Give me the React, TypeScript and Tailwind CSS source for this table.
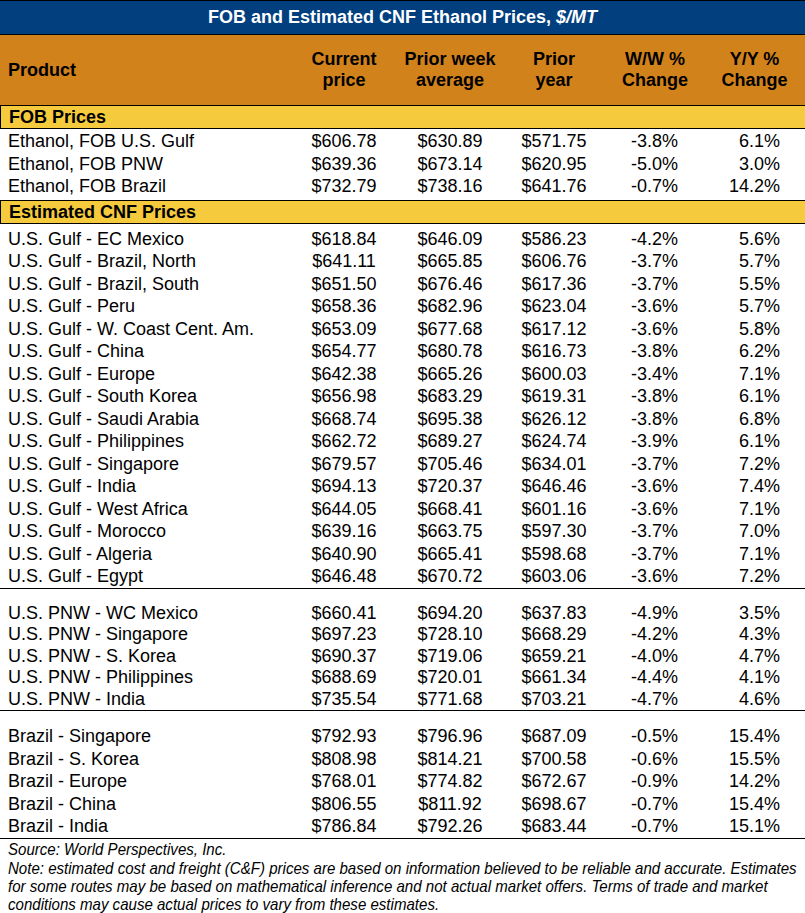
const fob = [
  ["Ethanol, FOB U.S. Gulf", "$606.78", "$630.89", "$571.75", "-3.8%", "6.1%"],
  ["Ethanol, FOB PNW", "$639.36", "$673.14", "$620.95", "-5.0%", "3.0%"],
  ["Ethanol, FOB Brazil", "$732.79", "$738.16", "$641.76", "-0.7%", "14.2%"],
];

const gulf = [
  ["U.S. Gulf - EC Mexico", "$618.84", "$646.09", "$586.23", "-4.2%", "5.6%"],
  ["U.S. Gulf - Brazil, North", "$641.11", "$665.85", "$606.76", "-3.7%", "5.7%"],
  ["U.S. Gulf - Brazil, South", "$651.50", "$676.46", "$617.36", "-3.7%", "5.5%"],
  ["U.S. Gulf - Peru", "$658.36", "$682.96", "$623.04", "-3.6%", "5.7%"],
  ["U.S. Gulf - W. Coast Cent. Am.", "$653.09", "$677.68", "$617.12", "-3.6%", "5.8%"],
  ["U.S. Gulf - China", "$654.77", "$680.78", "$616.73", "-3.8%", "6.2%"],
  ["U.S. Gulf - Europe", "$642.38", "$665.26", "$600.03", "-3.4%", "7.1%"],
  ["U.S. Gulf - South Korea", "$656.98", "$683.29", "$619.31", "-3.8%", "6.1%"],
  ["U.S. Gulf - Saudi Arabia", "$668.74", "$695.38", "$626.12", "-3.8%", "6.8%"],
  ["U.S. Gulf - Philippines", "$662.72", "$689.27", "$624.74", "-3.9%", "6.1%"],
  ["U.S. Gulf - Singapore", "$679.57", "$705.46", "$634.01", "-3.7%", "7.2%"],
  ["U.S. Gulf - India", "$694.13", "$720.37", "$646.46", "-3.6%", "7.4%"],
  ["U.S. Gulf - West Africa", "$644.05", "$668.41", "$601.16", "-3.6%", "7.1%"],
  ["U.S. Gulf - Morocco", "$639.16", "$663.75", "$597.30", "-3.7%", "7.0%"],
  ["U.S. Gulf - Algeria", "$640.90", "$665.41", "$598.68", "-3.7%", "7.1%"],
  ["U.S. Gulf - Egypt", "$646.48", "$670.72", "$603.06", "-3.6%", "7.2%"],
];

const pnw = [
  ["U.S. PNW - WC Mexico", "$660.41", "$694.20", "$637.83", "-4.9%", "3.5%"],
  ["U.S. PNW - Singapore", "$697.23", "$728.10", "$668.29", "-4.2%", "4.3%"],
  ["U.S. PNW - S. Korea", "$690.37", "$719.06", "$659.21", "-4.0%", "4.7%"],
  ["U.S. PNW - Philippines", "$688.69", "$720.01", "$661.34", "-4.4%", "4.1%"],
  ["U.S. PNW - India", "$735.54", "$771.68", "$703.21", "-4.7%", "4.6%"],
];

const brazil = [
  ["Brazil - Singapore", "$792.93", "$796.96", "$687.09", "-0.5%", "15.4%"],
  ["Brazil - S. Korea", "$808.98", "$814.21", "$700.58", "-0.6%", "15.5%"],
  ["Brazil - Europe", "$768.01", "$774.82", "$672.67", "-0.9%", "14.2%"],
  ["Brazil - China", "$806.55", "$811.92", "$698.67", "-0.7%", "15.4%"],
  ["Brazil - India", "$786.84", "$792.26", "$683.44", "-0.7%", "15.1%"],
];

const cols = "grid grid-cols-[290px_108px_104px_104px_98px_101px]";

function Row({ r, tight }: { r: string[]; tight?: boolean }) {
  return (
    <div className={`${cols} ${tight ? "h-[21.5px] leading-[21.5px]" : "h-[22.5px] leading-[22.5px]"}`}>
      <div className="pl-2 whitespace-nowrap">{r[0]}</div>
      <div className="text-center">{r[1]}</div>
      <div className="text-center">{r[2]}</div>
      <div className="text-center">{r[3]}</div>
      <div className="text-right pr-[26px]">{r[4]}</div>
      <div className="text-right pr-[25px]">{r[5]}</div>
    </div>
  );
}

function Section({ label }: { label: string }) {
  return (
    <div className="bg-[#f5cb3d] border-l border-black h-[23px] leading-[23px] pl-2 font-bold border-b">
      {label}
    </div>
  );
}

export default function App() {
  return (
    <div className="w-[805px] h-[913px] bg-white text-black text-[18px] font-['Liberation_Sans',Arial,sans-serif] overflow-hidden">
      {/* Title */}
      <div className="bg-[#013f7f] border-t border-b border-black h-[35px] flex items-center justify-center text-white font-bold">
        <span>
          FOB and Estimated CNF Ethanol Prices, <i>$/MT</i>
        </span>
      </div>

      {/* Header */}
      <div className={`${cols} bg-[#d2821a] h-[71px] border-b border-black font-bold leading-[21px] items-center`}>
        <div className="pl-2">Product</div>
        <div className="text-center">Current<br />price</div>
        <div className="text-center">Prior week<br />average</div>
        <div className="text-center">Prior<br />year</div>
        <div className="text-center">W/W %<br />Change</div>
        <div className="text-center">Y/Y %<br />Change</div>
      </div>

      <Section label="FOB Prices" />
      <div className="pt-[1px] pb-[2px] border-b border-black">
        {fob.map((r) => <Row key={r[0]} r={r} />)}
      </div>

      <Section label="Estimated CNF Prices" />
      <div className="pt-[4px] border-b border-black">
        {gulf.map((r) => <Row key={r[0]} r={r} />)}
      </div>
      <div className="pt-[14px] border-b border-black">
        {pnw.map((r) => <Row key={r[0]} r={r} tight />)}
      </div>
      <div className="pt-[14px] border-b border-black">
        {brazil.map((r) => <Row key={r[0]} r={r} />)}
      </div>

      {/* Footnotes (narrow italic face, squeezed since no narrow font is installed) */}
      <div className="w-[910px] origin-top-left scale-x-[0.886] pl-[9px] italic text-[17px] whitespace-nowrap">
        <p className="leading-[21px]">Source: World Perspectives, Inc.</p>
        <p className="leading-[18px]">
          Note: estimated cost and freight (C&amp;F) prices are based on information believed to be reliable and accurate. Estimates
        </p>
        <p className="leading-[18px]">
          for some routes may be based on mathematical inference and not actual market offers. Terms of trade and market
        </p>
        <p className="leading-[18px]">conditions may cause actual prices to vary from these estimates.</p>
      </div>
    </div>
  );
}
